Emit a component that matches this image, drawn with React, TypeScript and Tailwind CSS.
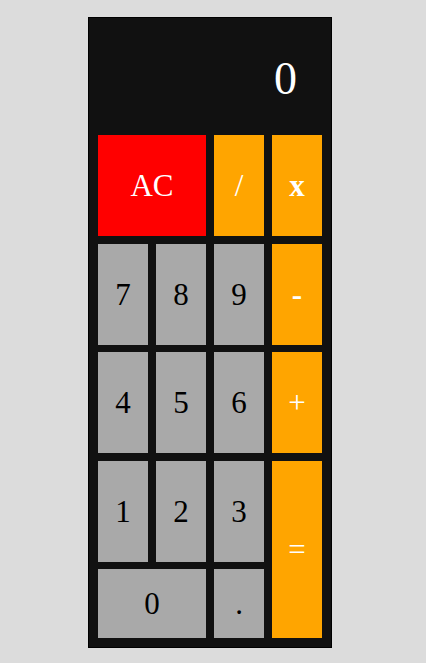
import React, { useState } from 'react';

type Key = {
  label: string;
  kind: 'clear' | 'op' | 'num';
  className: string;
};

const keys: Key[] = [
  { label: 'AC', kind: 'clear', className: 'col-span-2' },
  { label: '/', kind: 'op', className: '' },
  { label: 'x', kind: 'op', className: 'font-bold' },
  { label: '7', kind: 'num', className: '' },
  { label: '8', kind: 'num', className: '' },
  { label: '9', kind: 'num', className: '' },
  { label: '-', kind: 'op', className: 'font-bold' },
  { label: '4', kind: 'num', className: '' },
  { label: '5', kind: 'num', className: '' },
  { label: '6', kind: 'num', className: '' },
  { label: '+', kind: 'op', className: '' },
  { label: '1', kind: 'num', className: '' },
  { label: '2', kind: 'num', className: '' },
  { label: '3', kind: 'num', className: '' },
  { label: '=', kind: 'op', className: 'row-span-2' },
  { label: '0', kind: 'num', className: 'col-span-2' },
  { label: '.', kind: 'num', className: '' },
];

const kindStyle = {
  clear: 'bg-[#ff0000] text-white',
  op: 'bg-[#ffa500] text-white',
  num: 'bg-[#a9a9a9] text-black',
};

export default function App() {
  const [display, setDisplay] = useState('0');

  const press = (k: Key) => {
    if (k.label === 'AC') setDisplay('0');
  };

  return (
    <div className="min-h-screen bg-[#dcdcdc] pt-[17px] pl-[88px] font-['Liberation_Serif',serif]">
      <div className="w-[244px] border border-black bg-[#111111] px-[9px] pb-[9px]">
        <div className="flex h-[117px] items-center justify-end pr-[25px] pt-[4px] text-[46px] leading-none text-white">
          {display}
        </div>
        <div className="grid grid-cols-[50px_50px_50px_50px] grid-rows-[101px_101px_101px_101px_69px] gap-x-2 gap-y-[7.5px]">
          {keys.map((k) => (
            <button
              key={k.label}
              onClick={() => press(k)}
              className={`flex items-center justify-center text-[31px] leading-none ${kindStyle[k.kind]} ${k.className}`}
            >
              {k.label}
            </button>
          ))}
        </div>
      </div>
    </div>
  );
}
